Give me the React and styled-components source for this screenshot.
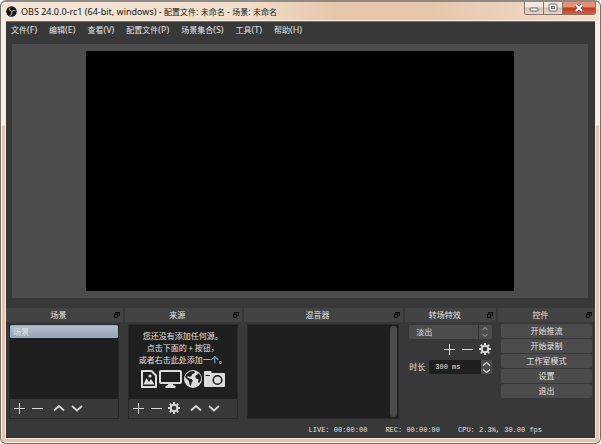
import React from "react";
import styled, { createGlobalStyle } from "styled-components";

const sans = `"Noto Sans", "Noto Sans CJK SC", sans-serif`;
const cjk = `"Noto Sans CJK SC", sans-serif`;
const mono = `"Liberation Mono", "Noto Sans CJK SC", monospace`;

const GlobalStyle = createGlobalStyle`
  *, *::before, *::after { box-sizing: border-box; }
  body { margin: 0; background: #fff; font: 8px/12px ${cjk}; color: #e2e2e2; }
  button, input, select { font: inherit; color: inherit; margin: 0; padding: 0; border: 0; }
  svg { display: block; }
`;

const Window = styled.div`
  display: flex;
  flex-direction: column;
  min-height: 100vh;
  padding: 0 5px 5px;
  border: 1px solid #75706b;
  border-top: 2px solid #8f8a84;
  border-radius: 6px;
  box-shadow: inset 0 0 0 1px #fbf1e6;
  background: linear-gradient(#fbece0 0 123px, #e6c5a8 124px);
`;

const TitleBar = styled.header`
  display: flex;
  align-items: flex-start;
  justify-content: space-between;
  height: 19px;
  margin: 0 -4px;
  padding: 0 3px 0 4px;
  border-radius: 4px 4px 0 0;
  background: linear-gradient(90deg, #f3e6da 0, #f1dfcd 240px, #e6c5a8 340px, #e6c5a8 70%, #f1dfd0 100%);
`;

const Title = styled.h1`
  display: flex;
  align-items: center;
  gap: 4px;
  margin: 0;
  padding-top: 3px;
  font: 400 8px/13px ${sans};
  color: #161412;
  white-space: nowrap;
`;

const Latin = styled.span`
  font-size: 9px;
  white-space: pre;
`;

const WindowButtons = styled.div`
  display: flex;
  border: 1px solid #877569;
  border-top: 0;
  border-radius: 0 0 3px 3px;
  overflow: hidden;
`;

const WindowButton = styled.button`
  display: grid;
  place-items: center;
  width: ${(p) => (p.$close ? 32 : 19)}px;
  height: 12px;
  border-right: ${(p) => (p.$close ? "0" : "1px solid #877569")};
  background: ${(p) =>
    p.$close
      ? "linear-gradient(#e0917c 0 40%, #c23a22 50%, #d4603f)"
      : "linear-gradient(#f3e8de 0 40%, #d3c1b3 50%, #e7d6c8)"};
`;

const Client = styled.main`
  display: flex;
  flex: 1;
  flex-direction: column;
  border-top: 1px solid #77706a;
  box-shadow: 0 0 0 1px #f7e8dc;
  background: #383838;
`;

const MenuBar = styled.nav`
  display: flex;
  gap: 12px;
  padding: 2px 5px 8px;
`;

const MenuItem = styled.button`
  background: none;
  font: 8px/12px ${sans};
  white-space: nowrap;
`;

const Preview = styled.section`
  display: grid;
  flex: 1;
  justify-items: center;
  margin: 0 7px 0 6px;
  padding: 7px 0;
  background: #4c4c4c;
`;

const Canvas = styled.div`
  height: 100%;
  aspect-ratio: 428 / 240;
  background: #000;
`;

const Docks = styled.div`
  display: grid;
  grid-template-columns: 117fr 117fr 160fr 91fr 97fr;
  gap: 2px;
  padding-top: 10px;
`;

const Dock = styled.section`
  display: flex;
  flex-direction: column;
  min-width: 0;
`;

const DockTitle = styled.header`
  display: flex;
  align-items: center;
  gap: 3px;
  height: 14px;
  padding-right: 3px;
  background: #434343;

  h2 { flex: 1; margin: 0; font: 400 8px/14px ${cjk}; text-align: center; }
  button { background: none; }
`;

const DockBody = styled.div`
  display: flex;
  flex-direction: column;
  height: 97px;
  padding: 2px 4px 0 3px;
`;

const Panel = styled.div`
  display: flex;
  flex: 1;
  flex-direction: column;
  border: 1px solid #292929;
  background: #1f1f1f;
`;

const SceneList = styled.ul`
  flex: 1;
  margin: 0;
  padding: 0;
  list-style: none;
`;

const SceneItem = styled.button`
  display: block;
  width: 100%;
  height: 13px;
  padding: 0 2px;
  border: 1px solid #8fb3d6;
  border-radius: 1px;
  background: linear-gradient(#b2bfce, #97a5b7);
  line-height: 10px;
  text-align: left;
`;

const ToolBar = styled.div`
  display: flex;
  align-items: center;
  gap: 6px;
  height: 19px;
  padding: 0 0 1px 3px;
  background: #383838;
`;

const ToolButton = styled.button`
  display: grid;
  place-items: center;
  width: 12px;
  height: 14px;
  margin-left: ${(p) => (p.$group ? 4 : 0)}px;
  background: none;
`;

const EmptySources = styled.div`
  display: flex;
  flex: 1;
  flex-direction: column;
  align-items: center;
  padding-top: 5px;
  line-height: 12px;
  text-align: center;
  white-space: nowrap;

  p { margin: 0; }
`;

const SourceIcons = styled.div`
  display: flex;
  align-items: center;
  gap: 2px;
  margin-top: 4px;
`;

const MixerPanel = styled(Panel)`
  align-items: flex-end;
  padding: 1px;
`;

const ScrollThumb = styled.div`
  flex: 1;
  width: 7px;
  border-radius: 4px;
  background: #4c4c4c;
`;

const SelectBox = styled.div`
  display: grid;
  grid-template-columns: 1fr 14px;
  align-items: center;
  height: 14px;
  margin: 1px 0 0 1px;
  border-radius: 2px;
  background: linear-gradient(90deg, #4c4c4c calc(100% - 14px), #363636 0 calc(100% - 13px), #4c4c4c 0);

  select {
    grid-area: 1 / 1 / 2 / 3;
    height: 14px;
    padding-left: 7px;
    appearance: none;
    background: none;
  }
  svg { grid-area: 1 / 2; justify-self: center; pointer-events: none; }
`;

const TransitionTools = styled.div`
  display: flex;
  justify-content: flex-end;
  gap: 6px;
  padding: 3px 1px 4px 0;
`;

const Duration = styled.div`
  display: flex;
  align-items: center;
  gap: 4px;
  height: 14px;
  padding-left: 1px;
  white-space: nowrap;

  input {
    flex: 1;
    min-width: 0;
    height: 14px;
    padding-left: 6px;
    border-radius: 2px 0 0 2px;
    background: #1f1f1f;
    font: 7px/14px ${mono};
  }
`;

const SpinField = styled.div`
  display: flex;
  flex: 1;
  min-width: 0;
`;

const Stepper = styled.div`
  display: grid;
  grid-template-rows: 7px 7px;
  width: 11px;
  background: #4c4c4c;

  button { display: grid; place-items: center; background: none; }
`;

const ControlList = styled.div`
  display: grid;
  gap: 1px;
  margin-right: -1px;
`;

const ControlButton = styled.button`
  height: 14px;
  border-radius: 2px;
  background: #4c4c4c;
  line-height: 14px;
`;

const StatusBar = styled.footer`
  display: flex;
  justify-content: flex-end;
  gap: 18px;
  height: 19px;
  padding: 6px 53px 0 0;
  font: 7px/10px ${mono};
  white-space: pre;
`;

const Stroke = ({ d, w = 12, h = 12, width = 1.3, color = "#d8d8d8" }) => (
  <svg width={w} height={h} viewBox={`0 0 ${w} ${h}`} fill="none" stroke={color} strokeWidth={width} aria-hidden="true">
    <path d={d} />
  </svg>
);

const Plus = () => <Stroke d="M1 6.5h11M6.5 1v11" width={1} />;
const Minus = () => <Stroke d="M1 6.5h11" width={1} />;
const Up = () => <Stroke d="M1 8.5 6 4l5 4.5" width={1.7} />;
const Down = () => <Stroke d="M1 4 6 8.5 11 4" width={1.7} />;

const Gear = () => (
  <svg width="12" height="12" viewBox="0 0 12 12" aria-hidden="true">
    <circle cx="6" cy="6" r="3.3" fill="none" stroke="#d8d8d8" strokeWidth="2" />
    <path
      d="M6 0v2M6 10v2M0 6h2M10 6h2M1.8 1.8l1.4 1.4M8.8 8.8l1.4 1.4M1.8 10.2l1.4-1.4M8.8 3.2l1.4-1.4"
      stroke="#d8d8d8"
      strokeWidth="2"
    />
  </svg>
);

const FloatIcon = () => (
  <svg width="6" height="6" viewBox="0 0 6 6" fill="none" stroke="#080808" aria-hidden="true">
    <path d="M1.500 1.500V.5h4v3h-1" />
    <path d="M.5 2.500h3v3h-3z" />
    <path d="M0 2.500h4M1 .8h5" />
  </svg>
);

const ObsLogo = () => (
  <svg width="11" height="11" viewBox="0 0 22 22" aria-hidden="true">
    <circle cx="11" cy="11" r="10.5" fill="#111" />
    <g fill="none" stroke="#d5cdc6" strokeWidth="2">
      <path d="M8 3c-2 3-.5 7 3 7.500" />
      <path d="M19 10c-3-2.500-7-1-7.500 2" />
      <path d="M7 18.500c4 0 6-3.500 4-7" />
    </g>
  </svg>
);

const PictureIcon = () => (
  <svg width="16" height="18" viewBox="0 0 16 18" aria-hidden="true">
    <path d="M1 1h9.500L15 5.500V17H1z" fill="none" stroke="#dcdcdc" strokeWidth="2" strokeLinejoin="round" />
    <path d="m2.500 14.500 3-6.500 2.500 4 2-3 3.500 5.500z" fill="#dcdcdc" />
    <circle cx="9" cy="6" r="1.600" fill="#dcdcdc" />
  </svg>
);

const MonitorIcon = () => (
  <svg width="23" height="18" viewBox="0 0 23 18" aria-hidden="true">
    <rect x="1" y="1" width="21" height="12" rx="1" fill="none" stroke="#dcdcdc" strokeWidth="2" />
    <path d="M9 13h5v2l2.500 1v2h-10v-2L9 15z" fill="#dcdcdc" />
  </svg>
);

const GlobeIcon = () => (
  <svg width="18" height="18" viewBox="0 0 18 18" aria-hidden="true">
    <circle cx="9" cy="9" r="9" fill="#dcdcdc" />
    <path
      d="M6 1.500 9.500 1l1.500 1-1 1.500-2 .5-.5 2-2 1-1.500-1L3 7l2 1.500 2.500.5L9 11l-1.500 1.500-.5 3.500-1.500-1.500L5 11 3 9 1 7l1.500-3zM12.500 5l2-1.500 2 2 .8 3.500-1.800 4-1.500-1 .5-2.500-2.500-1-.8-2z"
      fill="#1f1f1f"
    />
  </svg>
);

const CameraIcon = () => (
  <svg width="21" height="18" viewBox="0 0 21 18" aria-hidden="true">
    <path d="M1 1h6.500v2H20q1 0 1 1v12q0 1-1 1H1q-1 0-1-1V2q0-1 1-1z" fill="#dcdcdc" />
    <circle cx="13.500" cy="10" r="4.300" fill="none" stroke="#1f1f1f" strokeWidth="1.500" />
    <path d="M1.500 5.500h4.500" stroke="#1f1f1f" />
  </svg>
);

const menus = [
  ["文件", "F"],
  ["编辑", "E"],
  ["查看", "V"],
  ["配置文件", "P"],
  ["场景集合", "S"],
  ["工具", "T"],
  ["帮助", "H"],
];
const controls = ["开始推流", "开始录制", "工作室模式", "设置", "退出"];

function DockPane({ title, children }) {
  return (
    <Dock>
      <DockTitle>
        <h2>{title}</h2>
        <button aria-label={`浮动${title}`}><FloatIcon /></button>
      </DockTitle>
      <DockBody>{children}</DockBody>
    </Dock>
  );
}

function ListTools({ gear }) {
  return (
    <ToolBar>
      <ToolButton aria-label="添加"><Plus /></ToolButton>
      <ToolButton aria-label="移除"><Minus /></ToolButton>
      {gear && <ToolButton aria-label="属性"><Gear /></ToolButton>}
      <ToolButton aria-label="上移" $group><Up /></ToolButton>
      <ToolButton aria-label="下移"><Down /></ToolButton>
    </ToolBar>
  );
}

export default function App() {
  return (
    <>
      <GlobalStyle />
      <Window>
        <TitleBar>
          <Title>
            <ObsLogo />
            <span>
              <Latin>OBS 24.0.0-rc1 (64-bit, windows) - </Latin>配置文件<Latin>: </Latin>未命名
              <Latin> - </Latin>场景<Latin>: </Latin>未命名
            </span>
          </Title>
          <WindowButtons>
            <WindowButton aria-label="最小化">
              <svg width="10" height="10" viewBox="0 0 10 10"><rect x="1" y="5" width="8" height="3" rx="1" fill="#fff" stroke="#6b6763" /></svg>
            </WindowButton>
            <WindowButton aria-label="最大化">
              <svg width="10" height="10" viewBox="0 0 10 10"><rect x="1" y="1" width="8" height="7" rx="1" fill="#fff" stroke="#6b6763" /><rect x="3.500" y="3.500" width="3" height="2" fill="#ccc" stroke="#6b6763" /></svg>
            </WindowButton>
            <WindowButton aria-label="关闭" $close>
              <svg width="10" height="10" viewBox="0 0 10 10"><path d="m2 2 6 6M8 2 2 8" stroke="#6d4744" strokeWidth="3.500" /><path d="m2 2 6 6M8 2 2 8" stroke="#fff" strokeWidth="2" /></svg>
            </WindowButton>
          </WindowButtons>
        </TitleBar>
        <Client>
          <MenuBar>
            {menus.map(([name, key]) => (
              <MenuItem key={key}>{name}<Latin>({key})</Latin></MenuItem>
            ))}
          </MenuBar>
          <Preview><Canvas /></Preview>
          <Docks>
            <DockPane title="场景">
              <Panel>
                <SceneList><li><SceneItem>场景</SceneItem></li></SceneList>
                <ListTools />
              </Panel>
            </DockPane>
            <DockPane title="来源">
              <Panel>
                <EmptySources>
                  <p>您还没有添加任何源。</p>
                  <p>点击下面的 + 按钮，</p>
                  <p>或者右击此处添加一个。</p>
                  <SourceIcons><PictureIcon /><MonitorIcon /><GlobeIcon /><CameraIcon /></SourceIcons>
                </EmptySources>
                <ListTools gear />
              </Panel>
            </DockPane>
            <DockPane title="混音器">
              <MixerPanel><ScrollThumb /></MixerPanel>
            </DockPane>
            <DockPane title="转场特效">
              <SelectBox>
                <select aria-label="转场特效" defaultValue="淡出"><option>淡出</option></select>
                <Stroke w={8} h={12} d="M1.500 4 4 1.500 6.500 4M1.500 8 4 10.500 6.500 8" width={1} color="#aaa" />
              </SelectBox>
              <TransitionTools>
                <ToolButton aria-label="添加转场"><Plus /></ToolButton>
                <ToolButton aria-label="移除转场"><Minus /></ToolButton>
                <ToolButton aria-label="转场属性"><Gear /></ToolButton>
              </TransitionTools>
              <Duration>
                <label htmlFor="duration">时长</label>
                <SpinField>
                  <input id="duration" defaultValue="300 ms" />
                  <Stepper>
                    <button aria-label="增加"><Stroke w={9} h={6} d="M1 4.500 4.500 1.500 8 4.500" /></button>
                    <button aria-label="减少"><Stroke w={9} h={6} d="M1 1.500 4.500 4.500 8 1.500" /></button>
                  </Stepper>
                </SpinField>
              </Duration>
            </DockPane>
            <DockPane title="控件">
              <ControlList>
                {controls.map((c) => <ControlButton key={c}>{c}</ControlButton>)}
              </ControlList>
            </DockPane>
          </Docks>
          <StatusBar>
            <span>LIVE: 00:00:00</span>
            <span>REC: 00:00:00</span>
            <span>CPU: 2.3%, 30.00 fps</span>
          </StatusBar>
        </Client>
      </Window>
    </>
  );
}
